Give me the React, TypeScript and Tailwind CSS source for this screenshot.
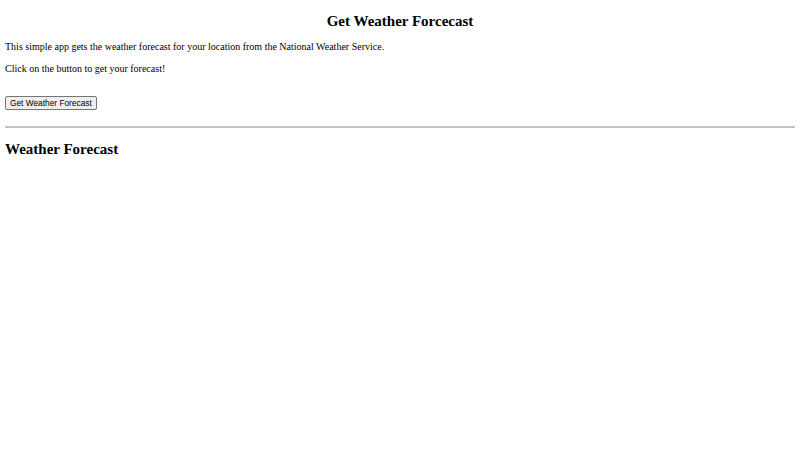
import { useState } from "react";

const serif = "font-['Liberation_Serif','Times_New_Roman',serif]";

export default function App() {
  const [loading, setLoading] = useState(false);

  return (
    <main className={`min-h-[450px] bg-white px-[5px] text-black ${serif}`}>
      <h2 className="mt-[13px] text-center text-[15px] font-bold leading-[17px]">
        Get Weather Forcecast
      </h2>
      <p className="mt-[11px] text-[10px] leading-[12px]">
        This simple app gets the weather forecast for your location from the National Weather Service.
      </p>
      <p className="mt-[10px] text-[10px] leading-[12px]">Click on the button to get your forecast!</p>

      <button
        type="button"
        onClick={() => setLoading(true)}
        className="mt-[21px] block rounded-[2px] border border-[#767676] bg-[#efefef] px-[4px] py-px font-['Liberation_Sans',Arial,sans-serif] text-[8.33px] leading-[10px] text-black"
      >
        Get Weather Forecast
      </button>

      <hr className="mt-[16px] h-[2px] border-0 bg-[#c2c2c2]" />

      <h2 className="mt-[13px] text-[15px] font-bold leading-[17px]">Weather Forecast</h2>
      {loading && <p className="mt-[10px] text-[10px] leading-[12px]">Loading...</p>}
    </main>
  );
}
